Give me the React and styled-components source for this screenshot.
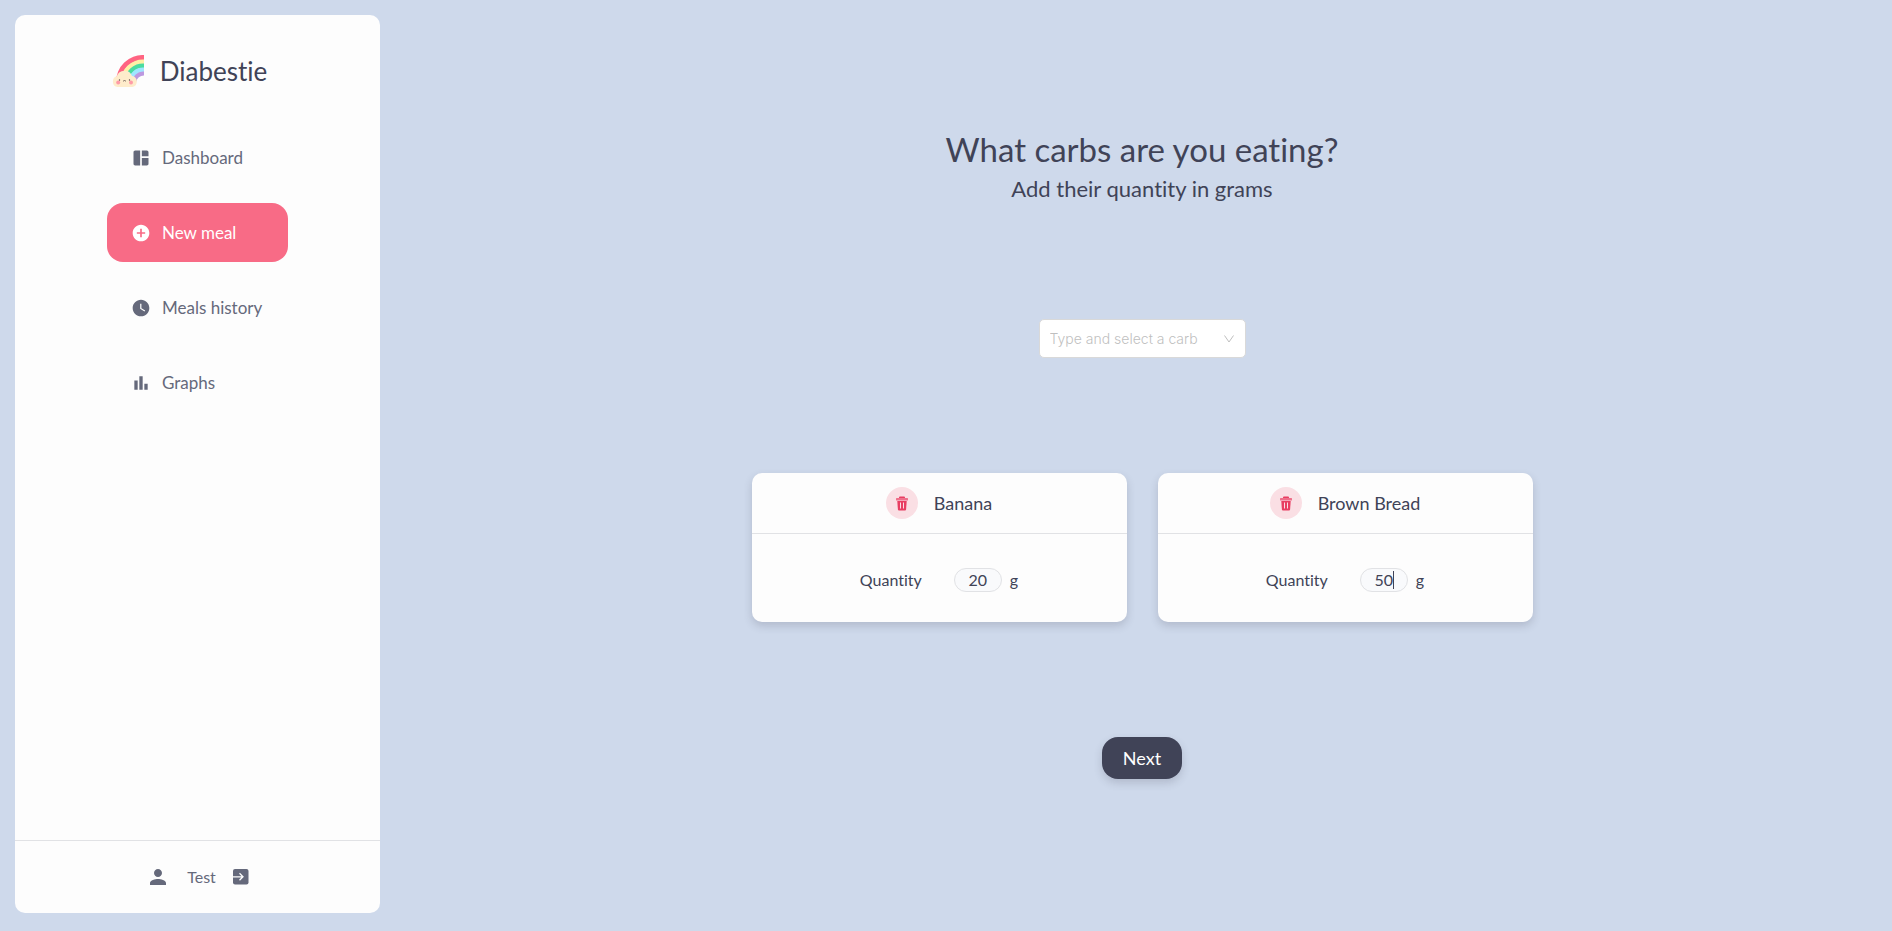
import React, { useEffect, useRef, useState } from "react";
import styled, { createGlobalStyle, css } from "styled-components";
import { MdSpaceDashboard, MdAddCircle, MdWatchLater, MdBarChart, MdPerson } from "react-icons/md";

const GlobalStyle = createGlobalStyle`
  *, *::before, *::after { box-sizing: border-box; }
  body {
    margin: 0;
    background: #ced9eb;
    color: #404357;
    font-family: Lato, "Liberation Sans", sans-serif;
    font-size: 16px;
    font-variant-ligatures: none;
    line-height: 24px;
  }
  button, input { font: inherit; color: inherit; }
`;

const Page = styled.div`
  display: flex;
  min-height: 100vh;
`;

const Sidebar = styled.aside`
  position: sticky;
  top: 15px;
  display: flex;
  flex-direction: column;
  align-items: center;
  flex: 0 0 365px;
  height: calc(100vh - 33px);
  margin: 15px 0 18px 15px;
  background: #fdfdfd;
  border-radius: 10px;
  color: #65697b;
`;

const Brand = styled.a`
  display: flex;
  align-items: center;
  gap: 16px;
  margin-top: 38px;
  padding-right: 16px;
  color: #404357;
  font-size: 26px;
  line-height: 36px;
  text-decoration: none;
`;

const Nav = styled.nav`
  display: flex;
  flex-direction: column;
  flex: 1;
  gap: 16px;
  margin-top: 39px;
`;

const NavItem = styled.a`
  display: flex;
  align-items: center;
  gap: 11px;
  width: 181px;
  height: 59px;
  padding-left: 24px;
  border-radius: 16px;
  color: inherit;
  font-size: 17px;
  text-decoration: none;
  ${(p) => p.$active && css`
    background: #f86b86;
    color: #fff;
  `}
  svg { width: 20px; height: 20px; }
`;

const UserBar = styled.footer`
  display: flex;
  align-items: center;
  justify-content: center;
  gap: 17px;
  width: 100%;
  height: 73px;
  border-top: 1px solid #e1e2e5;
`;

const IconButton = styled.button`
  display: flex;
  padding: 0;
  border: 0;
  background: none;
  cursor: pointer;
`;

const Main = styled.main`
  display: flex;
  flex: 1;
  flex-direction: column;
  align-items: center;
  padding: 128px 12px 20px 24px;
`;

const Title = styled.h1`
  margin: 0;
  font-size: 33px;
  font-weight: 400;
  line-height: 42px;
`;

const Subtitle = styled.p`
  margin: 3px 0 0;
  font-size: 22px;
  line-height: 32px;
`;

const Combo = styled.label`
  display: flex;
  align-items: center;
  width: 207px;
  height: 39px;
  margin-top: 114px;
  padding: 0 10px;
  border: 1px solid #d9d9d9;
  border-radius: 5px;
  background: #fff;
  color: #bfbfbf;
`;

const ComboInput = styled.input`
  flex: 1;
  min-width: 0;
  padding: 0;
  border: 0;
  outline: 0;
  background: none;
  font-family: Inter, sans-serif;
  font-size: 14px;
  font-weight: 300;
  &::placeholder { color: #bfbfbf; opacity: 1; }
`;

const Cards = styled.div`
  display: flex;
  flex-wrap: wrap;
  justify-content: center;
  gap: 31px;
  margin-top: 115px;
`;

const Card = styled.section`
  width: 375px;
  border-radius: 10px;
  background: #fdfdfd;
  box-shadow: 0 4px 8px rgba(64, 67, 87, 0.2);
`;

const CardHeader = styled.header`
  display: flex;
  align-items: center;
  justify-content: center;
  gap: 16px;
  height: 61px;
  border-bottom: 1px solid #e1e2e5;
`;

const CardTitle = styled.h2`
  margin: 0;
  font-size: 18px;
  font-weight: 400;
`;

const DeleteButton = styled.button`
  display: flex;
  align-items: center;
  justify-content: center;
  width: 32px;
  height: 32px;
  padding: 0;
  border: 0;
  border-radius: 50%;
  background: #fadfe4;
  color: #e83e62;
  cursor: pointer;
`;

const CardBody = styled.div`
  display: flex;
  align-items: center;
  justify-content: center;
  height: 88px;
  padding-top: 4px;
`;

const QuantityField = styled.span`
  position: relative;
  display: flex;
  margin: 0 8px 0 32px;
`;

const QuantityInput = styled.input`
  width: 48px;
  height: 24px;
  padding: 0;
  border: 1px solid #e1e2e5;
  border-radius: 12px;
  outline: 0;
  background: #f9fafc;
  caret-color: transparent;
  text-align: center;
`;

const Caret = styled.span`
  position: absolute;
  top: 3px;
  width: 1px;
  height: 18px;
  background: #404357;
  pointer-events: none;
`;

const NextButton = styled.button`
  width: 80px;
  height: 42px;
  margin-top: 115px;
  padding: 0;
  border: 0;
  border-radius: 16px;
  background: #404357;
  color: #fff;
  font-size: 18px;
  box-shadow: 0 4px 8px rgba(64, 67, 87, 0.2);
  cursor: pointer;
`;

function Rainbow() {
  return (
    <svg width="32" height="32" viewBox="0 0 32 32" aria-hidden="true">
      <path d="M4 27A27 27 0 0 1 32 0V5A22 22 0 0 0 9 27Z" fill="#ff6482" />
      <path d="M8.500 27A22.500 22.500 0 0 1 32 4.500V9A18 18 0 0 0 13 27Z" fill="#fff0a6" />
      <path d="M12.500 27A18.500 18.500 0 0 1 32 8.500V13A14 14 0 0 0 17 27Z" fill="#4bdca0" />
      <path d="M16.500 27A14.500 14.500 0 0 1 32 12.500V17A10 10 0 0 0 21 27Z" fill="#a0e6ff" />
      <path d="M20.500 27A10.500 10.500 0 0 1 32 16.500V20.500A8 8 0 0 0 24 27Z" fill="#bd99e0" />
      <path d="M5.500 32A5.500 5.500 0 0 1 4.800 21.300A8 8 0 0 1 20 21A5.600 5.600 0 0 1 20.500 32Z" fill="#feeccb" />
      <circle cx="6.200" cy="27.500" r="2" fill="#ff9ba8" />
      <circle cx="19" cy="27.500" r="2" fill="#ff9ba8" />
      <circle cx="7.500" cy="25" r="0.700" fill="#5c4a48" />
      <circle cx="17.500" cy="25" r="0.700" fill="#5c4a48" />
      <path d="M11 25.500q.800 1.200 1.500 0q.700 1.200 1.500 0" fill="none" stroke="#5c4a48" strokeWidth="0.800" />
    </svg>
  );
}

function ExitIcon() {
  return (
    <svg width="16" height="16" viewBox="0 0 16 16" aria-hidden="true">
      <rect width="15.500" height="15.500" rx="2" fill="#65697b" />
      <path d="M0 7.800H10M6.500 4.300l3.500 3.500L6.500 11.300" fill="none" stroke="#fdfdfd" strokeWidth="1.300" />
    </svg>
  );
}

function TrashIcon() {
  return (
    <svg width="12" height="15" viewBox="0 0 12 15" aria-hidden="true">
      <path d="M3 1.500Q3 .500 4 .500H8Q9 .500 9 1.500V2H3Z" fill="#e83e62" />
      <rect y="2" width="12" height="2.500" rx=".5" fill="#ee6f8a" />
      <path d="M1.300 5H10.700L10.100 13.500Q10 14.500 9 14.500H3Q2 14.500 1.900 13.500Z" fill="#e83e62" />
      <path d="M4.500 6.500V12.500M7.500 6.500V12.500" stroke="#fadfe4" />
    </svg>
  );
}

function Chevron() {
  return (
    <svg width="12" height="12" viewBox="0 0 12 12" fill="none" stroke="#bfbfbf" aria-hidden="true">
      <path d="M1.500 2.500L6 9L10.500 2.500" />
    </svg>
  );
}

const links = [
  { label: "Dashboard", Icon: MdSpaceDashboard },
  { label: "New meal", Icon: MdAddCircle, active: true },
  { label: "Meals history", Icon: MdWatchLater },
  { label: "Graphs", Icon: MdBarChart },
];

function CarbCard({ name, initial, autoFocused = false }) {
  const [value, setValue] = useState(initial);
  const [focused, setFocused] = useState(autoFocused);
  const ref = useRef(null);
  const id = `quantity-${name.replace(" ", "-")}`;
  useEffect(() => {
    if (autoFocused) ref.current.focus();
  }, []);
  return (
    <Card>
      <CardHeader>
        <DeleteButton type="button" aria-label={`Remove ${name}`}><TrashIcon /></DeleteButton>
        <CardTitle>{name}</CardTitle>
      </CardHeader>
      <CardBody>
        <label htmlFor={id}>Quantity</label>
        <QuantityField>
          <QuantityInput
            ref={ref}
            id={id}
            value={value}
            inputMode="numeric"
            onChange={(e) => setValue(e.target.value)}
            onFocus={() => setFocused(true)}
            onBlur={() => setFocused(false)}
          />
          {focused && <Caret style={{ left: `calc(50% + ${value.length / 2}ch)` }} />}
        </QuantityField>
        <span>g</span>
      </CardBody>
    </Card>
  );
}

export default function App() {
  return (
    <>
      <GlobalStyle />
      <Page>
        <Sidebar>
          <Brand href="#"><Rainbow />Diabestie</Brand>
          <Nav>
            {links.map(({ label, Icon, active }) => (
              <NavItem key={label} href="#" $active={active}><Icon />{label}</NavItem>
            ))}
          </Nav>
          <UserBar>
            <MdPerson size={24} />
            <span>Test</span>
            <IconButton type="button" aria-label="Log out"><ExitIcon /></IconButton>
          </UserBar>
        </Sidebar>
        <Main>
          <Title>What carbs are you eating?</Title>
          <Subtitle>Add their quantity in grams</Subtitle>
          <Combo>
            <ComboInput role="combobox" aria-label="Carb" aria-expanded="false" placeholder="Type and select a carb" />
            <Chevron />
          </Combo>
          <Cards>
            <CarbCard name="Banana" initial="20" />
            <CarbCard name="Brown Bread" initial="50" autoFocused />
          </Cards>
          <NextButton type="button">Next</NextButton>
        </Main>
      </Page>
    </>
  );
}
